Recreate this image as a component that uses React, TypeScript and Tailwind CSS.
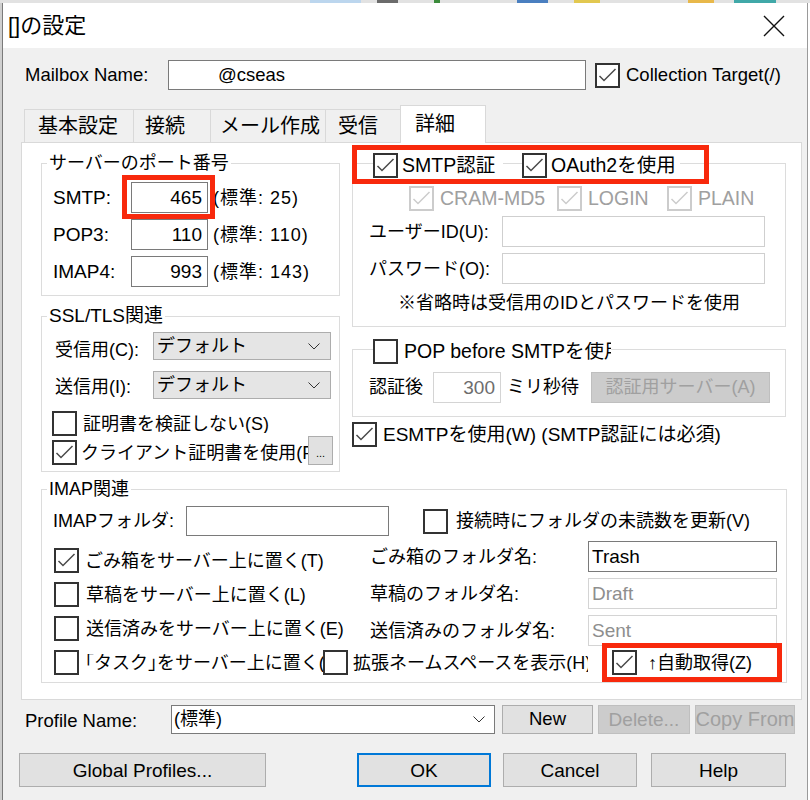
import React from "react";

function Check({ checked = false, disabled = false }: { checked?: boolean; disabled?: boolean }) {
  return (
    <div
      className={`w-[25px] h-[25px] shrink-0 border-2 bg-white ${
        disabled ? "border-[#cccccc]" : "border-[#333333]"
      }`}
    >
      {checked && (
        <svg width="21" height="21" viewBox="0 0 21 21" className="block">
          <path
            d="M2.5 11 L7 15.5 L18.5 4"
            fill="none"
            stroke={disabled ? "#cccccc" : "#4a4a4a"}
            strokeWidth="1.5"
          />
        </svg>
      )}
    </div>
  );
}

function Chevron() {
  return (
    <svg width="12" height="7" viewBox="0 0 12 7" className="block shrink-0">
      <path d="M0.5 0.5 L6 6 L11.5 0.5" fill="none" stroke="#333" strokeWidth="1" />
    </svg>
  );
}

function PortRow({ label, value, std }: { label: string; value: string; std: string }) {
  return (
    <div className="h-[31px] flex items-center">
      <span className="w-[78px] text-[19px]">{label}</span>
      <div className="w-[77px] h-[31px] bg-white border border-[#7a7a7a] flex items-center justify-end pr-[5px] text-[19px]">
        {value}
      </div>
      <span className="ml-[5px] whitespace-nowrap tracking-[1px]">{std}</span>
    </div>
  );
}

function Select({ text }: { text: string }) {
  return (
    <div className="w-[178px] h-[28px] bg-[#e5e5e5] border border-[#adadad] flex items-center justify-between pl-[3px] pr-[10px]">
      <span>{text}</span>
      <Chevron />
    </div>
  );
}

function FolderRow({ label, value, enabled }: { label: string; value: string; enabled?: boolean }) {
  return (
    <div className="h-[31px] flex items-center">
      <span className="w-[218px] whitespace-nowrap">{label}</span>
      <div
        className={`w-[189px] h-[31px] bg-white border flex items-center pl-[3px] text-[19px] ${
          enabled ? "border-[#7a7a7a] text-black" : "border-[#d4d4d4] text-[#8e8e8e]"
        }`}
      >
        {value}
      </div>
    </div>
  );
}

export default function App() {
  return (
    <div className="relative w-[810px] h-[800px] overflow-hidden bg-white flex flex-col text-[18px] leading-none text-black [font-family:'Liberation_Sans','Noto_Sans_CJK_JP',sans-serif]">
      {/* background window strip */}
      <div className="h-[3px] shrink-0 bg-[#e2e2e2] flex">
        <div className="w-[310px]" />
        <div className="w-[51px] bg-[#bcd6ee]" />
        <div className="w-[16px]" />
        <div className="w-[21px] bg-[#6b6b6b]" />
        <div className="w-[36px]" />
        <div className="w-[6px] bg-[#3c8c3c]" />
        <div className="w-[77px]" />
        <div className="w-[31px] bg-[#4a7fc0]" />
        <div className="w-[26px]" />
        <div className="w-[26px] bg-[#e2c850]" />
        <div className="w-[88px]" />
        <div className="w-[26px] bg-[#e8b84a]" />
        <div className="w-[20px]" />
        <div className="w-[42px] bg-[#40a8a8]" />
      </div>
      <div className="flex flex-1 min-h-0">
        <div className="w-[3px] shrink-0 bg-[#cfcfcf] border-r border-[#7a7a7a]" />
        <div className="w-[804px] shrink-0 flex flex-col bg-[#f0f0f0]">
          {/* title bar */}
          <div className="h-[45px] shrink-0 bg-white flex items-center justify-between pl-[5px] pr-[22px]">
            <span className="text-[22px]">[]の設定</span>
            <svg width="22" height="22" viewBox="0 0 22 22" className="block">
              <path d="M1 1L21 21M21 1L1 21" stroke="#111" strokeWidth="1.4" />
            </svg>
          </div>

          {/* mailbox row */}
          <div className="mt-[12px] h-[30px] flex items-center pl-[22px] text-[18.5px]">
            <span className="w-[143px]">Mailbox Name:</span>
            <div className="w-[418px] h-[30px] bg-white border border-[#7a7a7a] flex items-center pl-[49px]">
              @cseas
            </div>
            <div className="ml-[9px]">
              <Check checked />
            </div>
            <span className="ml-[6px] whitespace-nowrap">Collection Target(/)</span>
          </div>

          {/* tabs */}
          <div className="mt-[15px] h-[37px] flex items-end pl-[21px] relative z-10 text-[20px]">
            <div className="w-[109px] h-[33px] border-t border-l border-[#d9d9d9] bg-[#f0f0f0] flex items-center pl-[13px]">
              基本設定
            </div>
            <div className="w-[77px] h-[33px] border-t border-l border-[#d9d9d9] bg-[#f0f0f0] flex items-center pl-[11px]">
              接続
            </div>
            <div className="w-[115px] h-[33px] border-t border-l border-[#d9d9d9] bg-[#f0f0f0] flex items-center pl-[9px]">
              メール作成
            </div>
            <div className="w-[75px] h-[33px] border-t border-l border-[#d9d9d9] bg-[#f0f0f0] flex items-center pl-[12px]">
              受信
            </div>
            <div className="w-[86px] h-[38px] -mb-px border border-b-0 border-[#d9d9d9] bg-white flex items-center pl-[14px] pb-[2px]">
              詳細
            </div>
          </div>

          {/* panel */}
          <div className="ml-[18px] w-[781px] h-[558px] shrink-0 bg-white border border-[#d9d9d9] flex flex-col">
            <div className="flex pl-[19px]">
              {/* left column */}
              <div className="w-[299px] flex flex-col">
                <fieldset className="mt-[9px] border border-[#dcdcdc]">
                  <legend className="ml-[5px] px-[2px] leading-[22px]">サーバーのポート番号</legend>
                  <div className="pt-[8px] pb-[8px] pl-[11px] flex flex-col gap-[6px]">
                    <PortRow label="SMTP:" value="465" std="(標準: 25)" />
                    <PortRow label="POP3:" value="110" std="(標準: 110)" />
                    <PortRow label="IMAP4:" value="993" std="(標準: 143)" />
                  </div>
                </fieldset>

                <fieldset className="mt-[9px] border border-[#dcdcdc]">
                  <legend className="ml-[5px] px-[2px] leading-[22px] text-[19px]">SSL/TLS関連</legend>
                  <div className="pt-[5px] pb-[6px] pl-[10px] flex flex-col">
                    <div className="h-[28px] flex items-center ml-[3px]">
                      <span className="w-[98px] mt-[8px] whitespace-nowrap">受信用(C):</span>
                      <Select text="デフォルト" />
                    </div>
                    <div className="mt-[11px] h-[28px] flex items-center ml-[3px]">
                      <span className="w-[98px] mt-[3px] whitespace-nowrap">送信用(I):</span>
                      <Select text="デフォルト" />
                    </div>
                    <div className="mt-[12px] h-[25px] flex items-center">
                      <Check />
                      <span className="ml-[6px] w-[193px] overflow-hidden whitespace-nowrap">
                        証明書を検証しない(S)
                      </span>
                    </div>
                    <div className="h-[29px] flex items-end">
                      <Check checked />
                      <span className="ml-[4px] w-[227px] h-[25px] flex items-center overflow-hidden whitespace-nowrap">
                        クライアント証明書を使用(F)
                      </span>
                      <div className="w-[25px] h-[29px] bg-[#e1e1e1] border border-[#adadad] flex items-end justify-center pb-[5px] text-[11px]">
                        ...
                      </div>
                    </div>
                  </div>
                </fieldset>
              </div>

              {/* right column */}
              <div className="ml-[12px] w-[434px] flex flex-col">
                <fieldset className="mt-[5px] border border-[#dcdcdc]">
                  <legend className="ml-[20px]">
                    <div className="h-[30px] flex items-end text-[19.5px]">
                      <div className="w-[130px] h-[25px] flex items-center">
                        <Check checked />
                        <span className="ml-[4px] whitespace-nowrap">SMTP認証</span>
                      </div>
                      <div className="self-stretch w-[19px] flex items-center">
                        <div className="w-full h-px bg-[#dcdcdc]" />
                      </div>
                      <div className="w-[158px] h-[25px] flex items-center">
                        <Check checked />
                        <span className="ml-[4px] whitespace-nowrap">OAuth2を使用</span>
                      </div>
                    </div>
                  </legend>
                  <div className="pt-[8px] pb-[12px] flex flex-col">
                    <div className="h-[25px] flex items-center pl-[56px] text-[#a0a0a0] text-[19.5px]">
                      <div className="w-[148px] flex items-center">
                        <Check checked disabled />
                        <span className="ml-[6px]">CRAM-MD5</span>
                      </div>
                      <div className="w-[110px] flex items-center">
                        <Check checked disabled />
                        <span className="ml-[6px]">LOGIN</span>
                      </div>
                      <div className="flex items-center">
                        <Check checked disabled />
                        <span className="ml-[6px]">PLAIN</span>
                      </div>
                    </div>
                    <div className="mt-[5px] h-[31px] flex items-center pl-[16px]">
                      <span className="w-[133px] whitespace-nowrap">ユーザーID(U):</span>
                      <div className="w-[263px] h-[31px] bg-white border border-[#cfcfcf]" />
                    </div>
                    <div className="mt-[6px] h-[31px] flex items-center pl-[16px]">
                      <span className="w-[133px] whitespace-nowrap">パスワード(O):</span>
                      <div className="w-[263px] h-[31px] bg-white border border-[#cfcfcf]" />
                    </div>
                    <div className="mt-[8px] h-[22px] flex items-center pl-[45px] whitespace-nowrap">
                      ※省略時は受信用のIDとパスワードを使用
                    </div>
                  </div>
                </fieldset>

                <fieldset className="mt-[7px] border border-[#dcdcdc]">
                  <legend className="ml-[20px]">
                    <div className="h-[30px] flex items-end">
                      <div className="h-[25px] flex items-center">
                        <Check />
                        <span className="ml-[6px] w-[207px] overflow-hidden whitespace-nowrap text-[19.5px]">
                          POP before SMTPを使用
                        </span>
                      </div>
                    </div>
                  </legend>
                  <div className="pt-[7px] pb-[13px] pl-[16px] h-[52px] flex items-start">
                    <div className="h-[32px] flex items-center">
                      <span className="w-[64px]">認証後</span>
                      <div className="w-[68px] h-[31px] bg-white border border-[#d4d4d4] flex items-center justify-end pr-[5px] text-[#6d6d6d] text-[19px]">
                        300
                      </div>
                      <span className="ml-[6px] w-[84px]">ミリ秒待</span>
                      <div className="w-[179px] h-[31px] bg-[#cccccc] border border-[#bfbfbf] flex items-center justify-center text-[#a0a0a0] whitespace-nowrap">
                        認証用サーバー(A)
                      </div>
                    </div>
                  </div>
                </fieldset>

                <div className="mt-[5px] h-[25px] flex items-center">
                  <Check checked />
                  <span className="ml-[6px] whitespace-nowrap text-[19px]">ESMTPを使用(W) (SMTP認証には必須)</span>
                </div>
              </div>
            </div>

            {/* IMAP group */}
            <fieldset className="ml-[19px] mt-[6px] w-[746px] border border-[#dcdcdc]">
              <legend className="ml-[5px] px-[2px] leading-[22px]">IMAP関連</legend>
              <div className="pt-[6px] pb-[7px] pl-[11px] flex flex-col">
                <div className="h-[30px] flex items-center">
                  <span className="w-[133px] whitespace-nowrap">IMAPフォルダ:</span>
                  <div className="w-[203px] h-[30px] bg-white border border-[#7a7a7a]" />
                  <div className="ml-[34px]">
                    <Check />
                  </div>
                  <span className="ml-[8px] whitespace-nowrap">接続時にフォルダの未読数を更新(V)</span>
                </div>
                <div className="mt-[5px] flex">
                  <div className="w-[317px] pt-[7px] flex flex-col gap-[9px]">
                    <div className="h-[25px] flex items-center ml-[1px]">
                      <Check checked />
                      <span className="ml-[6px] whitespace-nowrap">ごみ箱をサーバー上に置く(T)</span>
                    </div>
                    <div className="h-[25px] flex items-center ml-[1px]">
                      <Check />
                      <span className="ml-[7px] whitespace-nowrap">草稿をサーバー上に置く(L)</span>
                    </div>
                    <div className="h-[25px] flex items-center ml-[1px]">
                      <Check />
                      <span className="ml-[7px] whitespace-nowrap">送信済みをサーバー上に置く(E)</span>
                    </div>
                  </div>
                  <div className="flex flex-col gap-[6px]">
                    <FolderRow label="ごみ箱のフォルダ名:" value="Trash" enabled />
                    <FolderRow label="草稿のフォルダ名:" value="Draft" />
                    <FolderRow label="送信済みのフォルダ名:" value="Sent" />
                  </div>
                </div>
                <div className="mt-[4px] h-[25px] flex items-center ml-[1px]">
                  <Check />
                  <span className="ml-[6px] w-[238px] overflow-hidden whitespace-nowrap">
                    ｢タスク｣をサーバー上に置く(K)
                  </span>
                  <Check />
                  <span className="ml-[5px] w-[235px] overflow-hidden whitespace-nowrap">
                    拡張ネームスペースを表示(H)
                  </span>
                  <div className="ml-[24px]">
                    <Check checked />
                  </div>
                  <span className="ml-[11px] whitespace-nowrap">↑自動取得(Z)</span>
                </div>
              </div>
            </fieldset>
          </div>

          {/* profile row */}
          <div className="mt-[4px] h-[30px] flex items-center pl-[22px] text-[18.5px]">
            <span className="w-[146px] whitespace-nowrap mt-[4px]">Profile Name:</span>
            <div className="w-[324px] h-[29px] bg-white border border-[#7a7a7a] flex items-center justify-between pl-[2px] pr-[9px]">
              <span className="text-[18px]">(標準)</span>
              <Chevron />
            </div>
            <div className="ml-[7px] w-[91px] h-[29px] bg-[#e1e1e1] border border-[#adadad] flex items-center justify-center">
              New
            </div>
            <div className="ml-[5px] w-[92px] h-[29px] bg-[#cccccc] border border-[#bfbfbf] flex items-center justify-center text-[#a0a0a0] text-[19px] whitespace-nowrap overflow-hidden">
              Delete...
            </div>
            <div className="ml-[5px] w-[100px] h-[29px] bg-[#cccccc] border border-[#bfbfbf] flex items-center justify-center text-[#a0a0a0] text-[20px] whitespace-nowrap overflow-hidden">
              Copy From
            </div>
          </div>

          {/* bottom buttons */}
          <div className="mt-[19px] h-[34px] flex items-center pl-[16px] text-[19px]">
            <div className="w-[247px] h-[34px] bg-[#e1e1e1] border border-[#adadad] flex items-center justify-center">
              Global Profiles...
            </div>
            <div className="ml-[91px] w-[134px] h-[34px] bg-[#e1e1e1] border-2 border-[#0078d7] flex items-center justify-center">
              OK
            </div>
            <div className="ml-[12px] w-[134px] h-[34px] bg-[#e1e1e1] border border-[#adadad] flex items-center justify-center">
              Cancel
            </div>
            <div className="ml-[14px] w-[135px] h-[34px] bg-[#e1e1e1] border border-[#adadad] flex items-center justify-center">
              Help
            </div>
          </div>
        </div>
        <div className="flex-1 bg-white border-l border-[#9a9a9a]" />
      </div>

      {/* red annotation boxes */}
      <div className="absolute left-[122px] top-[175px] w-[93px] h-[44px] border-[5px] border-[#f8290c]" />
      <div className="absolute left-[352px] top-[145px] w-[357px] h-[39px] border-[5px] border-[#f8290c]" />
      <div className="absolute left-[602px] top-[643px] w-[180px] h-[39px] border-[5px] border-[#f8290c]" />
    </div>
  );
}
